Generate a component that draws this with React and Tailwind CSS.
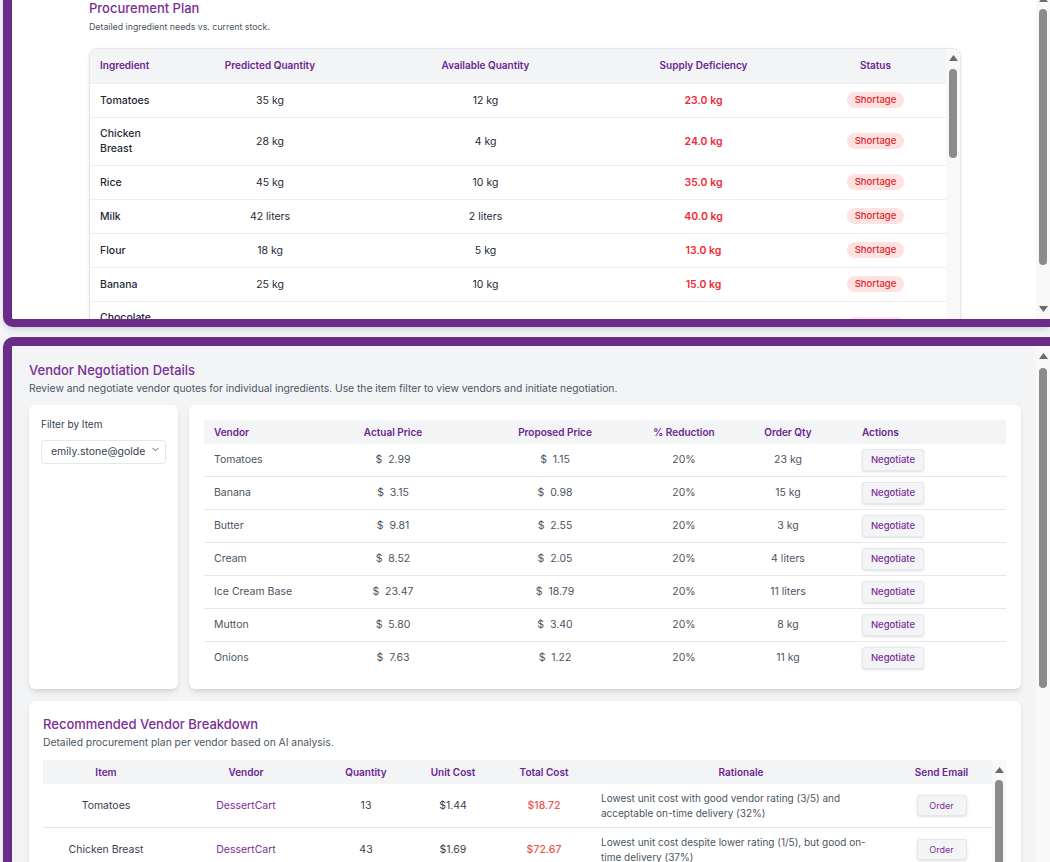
import React from "react";
import { ChevronDown } from "lucide-react";

const procurement = [
  ["Tomatoes", "35 kg", "12 kg", "23.0 kg"],
  ["Chicken Breast", "28 kg", "4 kg", "24.0 kg"],
  ["Rice", "45 kg", "10 kg", "35.0 kg"],
  ["Milk", "42 liters", "2 liters", "40.0 kg"],
  ["Flour", "18 kg", "5 kg", "13.0 kg"],
  ["Banana", "25 kg", "10 kg", "15.0 kg"],
  ["Chocolate Chips", "12 kg", "3 kg", "9.0 kg"],
  ["Butter", "15 kg", "3 kg", "12.0 kg"],
  ["Cream", "20 liters", "4 liters", "16.0 kg"],
  ["Mutton", "22 kg", "8 kg", "14.0 kg"],
];

const vendors = [
  ["Tomatoes", "2.99", "1.15", "20%", "23 kg"],
  ["Banana", "3.15", "0.98", "20%", "15 kg"],
  ["Butter", "9.81", "2.55", "20%", "3 kg"],
  ["Cream", "8.52", "2.05", "20%", "4 liters"],
  ["Ice Cream Base", "23.47", "18.79", "20%", "11 liters"],
  ["Mutton", "5.80", "3.40", "20%", "8 kg"],
  ["Onions", "7.63", "1.22", "20%", "11 kg"],
];

const recommended = [
  ["Tomatoes", "DessertCart", "13", "$1.44", "$18.72", "Lowest unit cost with good vendor rating (3/5) and acceptable on-time delivery (32%)"],
  ["Chicken Breast", "DessertCart", "43", "$1.69", "$72.67", "Lowest unit cost despite lower rating (1/5), but good on-time delivery (37%)"],
  ["Rice", "FreshFarm", "35", "$0.92", "$32.20", "Competitive unit cost with strong vendor rating (4/5) and reliable on-time delivery (81%)"],
];

function Arrow({ dir }) {
  return (
    <div className="flex h-[14px] items-center justify-center">
      <svg width="9" height="6" viewBox="0 0 9 6">
        {dir === "up" ? (
          <path d="M0 6 L4.5 0 L9 6 Z" fill="#6b6b6b" />
        ) : (
          <path d="M0 0 L4.5 6 L9 0 Z" fill="#6b6b6b" />
        )}
      </svg>
    </div>
  );
}

function Thumb({ h }) {
  return <div className="mx-auto w-[8px] rounded-full bg-[#8b8b8b]" style={{ height: h }} />;
}

export default function App() {
  return (
    <div className="h-[862px] w-[1050px] overflow-hidden bg-[#f3f4f6] pl-[3px] font-[family-name:Inter,sans-serif]">
      {/* Procurement Plan card */}
      <section className="-mt-[8px] rounded-bl-[10px] border-b-[8px] border-l-[9px] border-[#6b2c89] bg-white shadow-md">
        <div className="flex h-[327px]">
          <div className="min-w-0 flex-1 overflow-hidden">
            <div className="ml-[77px] w-[872px] pb-[16px] pt-[7px]">
              <h2 className="text-[13px] font-medium leading-[18px] text-[#7b2d96]">Procurement Plan</h2>
              <p className="mt-[3px] text-[8.8px] leading-[14px] text-[#4b5563]">
                Detailed ingredient needs vs. current stock.
              </p>
              <div className="mt-[14px] flex h-[300px] overflow-hidden rounded-lg border border-[#e5e7eb] shadow-sm">
                <div className="min-w-0 flex-1 overflow-hidden">
                  <table className="w-full table-fixed border-collapse">
                    <colgroup>
                      <col className="w-[81px]" />
                      <col className="w-[198px]" />
                      <col className="w-[233px]" />
                      <col className="w-[203px]" />
                      <col />
                    </colgroup>
                    <thead>
                      <tr className="h-[34px] bg-[#f3f4f6] text-[10px] text-[#6b2490]">
                        <th className="px-[10px] text-left font-semibold">Ingredient</th>
                        <th className="px-[10px] text-center font-semibold">Predicted Quantity</th>
                        <th className="px-[10px] text-center font-semibold">Available Quantity</th>
                        <th className="px-[10px] text-center font-semibold">Supply Deficiency</th>
                        <th className="px-[10px] text-center font-semibold">Status</th>
                      </tr>
                    </thead>
                    <tbody>
                      {procurement.map((r) => (
                        <tr key={r[0]} className="border-t border-[#eceef1] text-[10.5px] leading-[15px] text-[#1f2937]">
                          <td className="px-[10px] py-[8.5px] font-medium">{r[0]}</td>
                          <td className="px-[10px] py-[8.5px] text-center">{r[1]}</td>
                          <td className="px-[10px] py-[8.5px] text-center">{r[2]}</td>
                          <td className="px-[10px] py-[8.5px] text-center font-semibold text-[#ef2b3a]">{r[3]}</td>
                          <td className="px-[10px] py-[8.5px]">
                            <div className="flex justify-center">
                              <span className="rounded-full bg-[#fee2e2] px-[8px] py-[2px] text-[9.5px] font-medium leading-[12px] text-[#dc2626]">
                                Shortage
                              </span>
                            </div>
                          </td>
                        </tr>
                      ))}
                    </tbody>
                  </table>
                </div>
                <div className="flex w-[14px] shrink-0 flex-col bg-[#f8f8f8] pt-[2px]">
                  <Arrow dir="up" />
                  <div className="mt-[4px]">
                    <Thumb h={89} />
                  </div>
                </div>
              </div>
            </div>
          </div>
          <div className="flex w-[14px] shrink-0 flex-col justify-between bg-[#f8f8f8] pb-[3px]">
            <div>
              <Arrow dir="up" />
              <div className="mt-[3px]">
                <Thumb h={256} />
              </div>
            </div>
            <Arrow dir="down" />
          </div>
        </div>
      </section>

      {/* Vendor Negotiation card */}
      <section className="mt-[10px] rounded-tl-[10px] border-l-[9px] border-t-[9px] border-[#6b2c89] bg-[#f3f4f6] shadow-md">
        <div className="flex h-[620px]">
          <div className="min-w-0 flex-1 overflow-hidden pb-[16px] pl-[17px] pr-[15px] pt-[15px]">
            <h2 className="text-[13px] font-medium leading-[18px] text-[#7b2d96]">Vendor Negotiation Details</h2>
            <p className="mt-[1.5px] text-[10.3px] leading-[15px] text-[#4b5563]">
              Review and negotiate vendor quotes for individual ingredients. Use the item filter to view vendors and initiate negotiation.
            </p>

            <div className="mt-[9.5px] flex h-[284px] gap-[11px]">
              <div className="w-[149px] shrink-0 rounded-md bg-white p-[12px] shadow-md">
                <label className="block text-[10px] leading-[14px] text-[#374151]">Filter by Item</label>
                <div className="relative mt-[6px] w-[125px]">
                  <select className="h-[24px] w-[125px] appearance-none overflow-hidden rounded border border-[#e5e7eb] bg-white pl-[9px] pr-[20px] text-[10.5px] text-[#374151]">
                    <option>emily.stone@goldenspoon.com</option>
                  </select>
                  <ChevronDown size={11} strokeWidth={2} className="pointer-events-none absolute right-[5px] top-[6.5px] text-[#4b5563]" />
                </div>
              </div>

              <div className="flex-1 rounded-md bg-white px-[15px] pt-[15px] shadow-md">
                <table className="w-full table-fixed border-collapse">
                  <colgroup>
                    <col className="w-[116px]" />
                    <col className="w-[146px]" />
                    <col className="w-[178px]" />
                    <col className="w-[80px]" />
                    <col className="w-[128px]" />
                    <col />
                  </colgroup>
                  <thead>
                    <tr className="h-[24px] bg-[#f3f4f6] text-[10px] text-[#6b2490]">
                      <th className="px-[10px] text-left font-semibold">Vendor</th>
                      <th className="px-[10px] text-center font-semibold">Actual Price</th>
                      <th className="px-[10px] text-center font-semibold">Proposed Price</th>
                      <th className="px-[4px] text-center font-semibold">% Reduction</th>
                      <th className="px-[10px] text-center font-semibold">Order Qty</th>
                      <th className="px-[10px] text-left font-semibold">Actions</th>
                    </tr>
                  </thead>
                  <tbody>
                    {vendors.map((v, i) => (
                      <tr
                        key={v[0]}
                        className={i < vendors.length - 1 ? "border-b border-[#e5e7eb] text-[10.5px] text-[#4b5563]" : "text-[10.5px] text-[#4b5563]"}
                      >
                        <td className="px-[10px] py-[5px]">{v[0]}</td>
                        <td className="whitespace-pre px-[10px] py-[5px] text-center">{"$  " + v[1]}</td>
                        <td className="whitespace-pre px-[10px] py-[5px] text-center">{"$  " + v[2]}</td>
                        <td className="px-[4px] py-[5px] text-center">{v[3]}</td>
                        <td className="px-[10px] py-[5px] text-center">{v[4]}</td>
                        <td className="px-[10px] py-[5px]">
                          <button className="h-[22px] w-[62px] rounded-[3px] border border-[#e5e7eb] bg-[#f3f4f6] text-[9.5px] font-medium text-[#7b2d96] shadow-sm">
                            Negotiate
                          </button>
                        </td>
                      </tr>
                    ))}
                  </tbody>
                </table>
              </div>
            </div>

            {/* Recommended Vendor Breakdown */}
            <div className="mt-[12px] rounded-lg bg-white pb-[15px] pl-[14px] pr-[15px] pt-[14px] shadow-md">
              <h2 className="text-[13px] font-medium leading-[18px] text-[#7b2d96]">Recommended Vendor Breakdown</h2>
              <p className="mt-[1.5px] text-[10.3px] leading-[15px] text-[#4b5563]">
                Detailed procurement plan per vendor based on AI analysis.
              </p>
              <div className="mt-[10.5px] flex h-[300px] overflow-hidden">
                <div className="min-w-0 flex-1 overflow-hidden">
                  <table className="w-full table-fixed border-collapse">
                    <colgroup>
                      <col className="w-[126px]" />
                      <col className="w-[154px]" />
                      <col className="w-[86px]" />
                      <col className="w-[88px]" />
                      <col className="w-[94px]" />
                      <col className="w-[300px]" />
                      <col />
                    </colgroup>
                    <thead>
                      <tr className="h-[24px] bg-[#f3f4f6] text-[10px] text-[#6b2490]">
                        <th className="px-[6px] text-center font-semibold">Item</th>
                        <th className="px-[6px] text-center font-semibold">Vendor</th>
                        <th className="px-[6px] text-center font-semibold">Quantity</th>
                        <th className="px-[6px] text-center font-semibold">Unit Cost</th>
                        <th className="px-[6px] text-center font-semibold">Total Cost</th>
                        <th className="px-[10px] text-center font-semibold">Rationale</th>
                        <th className="px-[6px] text-center font-semibold">Send Email</th>
                      </tr>
                    </thead>
                    <tbody>
                      {recommended.map((r) => (
                        <tr key={r[0]} className="border-b border-[#e5e7eb] text-[10.5px] text-[#374151]">
                          <td className="px-[6px] py-[6.5px] text-center">{r[0]}</td>
                          <td className="px-[6px] py-[6.5px] text-center text-[#7b2d96]">{r[1]}</td>
                          <td className="px-[6px] py-[6.5px] text-center">{r[2]}</td>
                          <td className="px-[6px] py-[6.5px] text-center">{r[3]}</td>
                          <td className="px-[6px] py-[6.5px] text-center font-medium text-[#f05252]">{r[4]}</td>
                          <td className="px-[10px] py-[6.5px] text-[10px] leading-[15px] text-[#4b5563]">{r[5]}</td>
                          <td className="px-[6px] py-[6.5px] text-center">
                            <button className="h-[21px] w-[50px] rounded-[3px] border border-[#e5e7eb] bg-[#f3f4f6] text-[9px] text-[#7b2d96] shadow-sm">
                              Order
                            </button>
                          </td>
                        </tr>
                      ))}
                    </tbody>
                  </table>
                </div>
                <div className="flex w-[14px] shrink-0 flex-col bg-[#f8f8f8] pt-[3px]">
                  <Arrow dir="up" />
                  <div className="mt-[3px]">
                    <Thumb h={200} />
                  </div>
                </div>
              </div>
            </div>
          </div>
          <div className="flex w-[14px] shrink-0 flex-col bg-[#f8f8f8] pt-[3px]">
            <Arrow dir="up" />
            <div className="mt-[5px]">
              <Thumb h={320} />
            </div>
          </div>
        </div>
      </section>
    </div>
  );
}
